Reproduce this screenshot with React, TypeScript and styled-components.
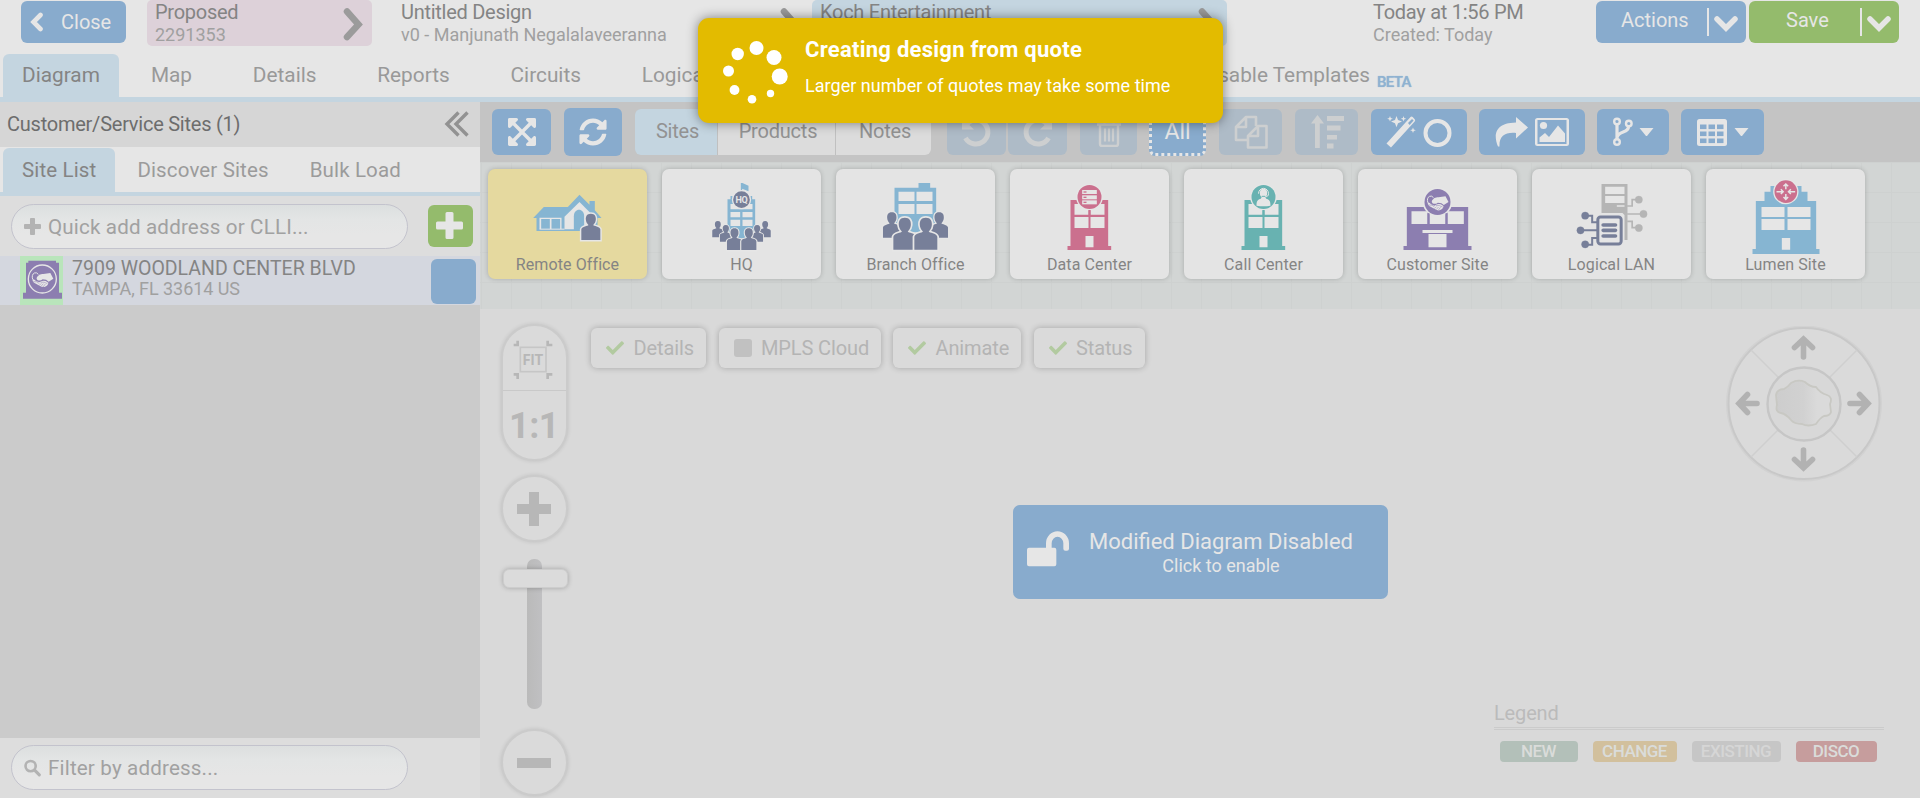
import React from 'react';
import styled, { createGlobalStyle, css } from 'styled-components';
import { FaCheck, FaExpandArrowsAlt, FaSyncAlt } from 'react-icons/fa';

const blue = '#88abcd';
const paleBlue = '#c4d5e0';
const green = '#94bb6c';
const light = '#e6e6e6';
const slate = '#777f99';
const sky = '#86b5d2';
const purple = '#8c7eb0';

const GlobalStyle = createGlobalStyle`
  * { box-sizing: border-box; }
  body { margin: 0; background: ${light}; overflow: hidden; }
  svg { display: block; flex: none; }
`;

const Page = styled.div`
  width: 1920px;
  height: 798px;
  display: flex;
  flex-direction: column;
  background: ${light};
  font-family: Roboto, sans-serif;
  font-size: 20px;
  line-height: 24px;
  color: #848484;
  white-space: nowrap;
  overflow: hidden;
`;

/* ---------- header ---------- */

const Header = styled.header`
  height: 54px;
  display: flex;
  padding-left: 21px;
`;

const CloseButton = styled.button`
  width: 105px;
  height: 42px;
  margin: 1px 21px 0 0;
  padding: 0 0 0 8px;
  display: flex;
  align-items: center;
  gap: 17px;
  border: 0;
  border-radius: 6px;
  background: ${blue};
  color: ${light};
  font: 400 20px/24px Roboto, sans-serif;
`;

const Step = styled.div<{ $width: number; $bg?: string }>`
  width: ${p => p.$width}px;
  height: 46px;
  padding: 0 8px;
  display: flex;
  justify-content: space-between;
  border-radius: 5px;
  background: ${p => p.$bg ?? 'transparent'};
  svg { margin: 8px -1px 0 0; }
`;

const StepText = styled.div`
  display: flex;
  flex-direction: column;
`;

const StepTitle = styled.span`
  height: 24px;
  line-height: 25px;
  font-size: 20px;
  letter-spacing: -0.27px;
`;

const StepSub = styled.span`
  font-size: 18px;
  line-height: 21px;
  color: #a0a0a0;
`;

const SplitButton = styled.div<{ $bg: string }>`
  width: 150px;
  height: 42px;
  margin: 1px 3px 0 0;
  display: flex;
  align-items: center;
  border-radius: 6px;
  background: ${p => p.$bg};
  color: ${light};
`;

const SplitLabel = styled.span<{ $left: number }>`
  flex: 1;
  padding: 0 0 4px ${p => p.$left}px;
`;

const SplitDrop = styled.span`
  width: 39px;
  height: 28px;
  padding: 3px 0 0 4px;
  display: flex;
  align-items: center;
  border-left: 2px solid ${light};
`;

/* ---------- main tabs ---------- */

const MainTabs = styled.nav`
  height: 48px;
  display: flex;
  padding-left: 3px;
  border-bottom: 5px solid ${paleBlue};
  font-size: 20.8px;
`;

const MainTab = styled.a<{ $active?: boolean; $gap?: number }>`
  height: 43px;
  padding: 0 19px;
  margin-left: ${p => p.$gap ?? 22.8}px;
  line-height: 42px;
  color: ${p => (p.$active ? '#848484' : '#999')};
  border-radius: 6px 6px 0 0;
  background: ${p => (p.$active ? paleBlue : 'transparent')};
`;

const Beta = styled.sub`
  margin-left: 7px;
  color: #8fb2d1;
  font-size: 15px;
  font-weight: 500;
  letter-spacing: -0.7px;
  line-height: 0;
  vertical-align: -5px;
  text-shadow: 0 0 1px #8fb2d1;
`;

/* ---------- side panel ---------- */

const Body = styled.div`
  flex: 1;
  display: flex;
`;

const SidePanel = styled.aside`
  width: 480px;
  display: flex;
  flex-direction: column;
  background: #cbcbcb;
`;

const PanelTitle = styled.div`
  height: 45px;
  padding: 0 11px 2px 7px;
  display: flex;
  align-items: center;
  justify-content: space-between;
  background: #d6d6d6;
  color: #6d6d6d;
  letter-spacing: -0.24px;
`;

const PanelTabs = styled.div`
  height: 49px;
  display: flex;
  padding: 1px 0 0 3px;
  background: ${light};
  border-bottom: 4px solid ${paleBlue};
`;

const PanelTab = styled.a<{ $active?: boolean }>`
  padding: 0 19px;
  margin-right: 3px;
  line-height: 44px;
  font-size: 20.5px;
  letter-spacing: 0.14px;
  color: ${p => (p.$active ? '#848484' : '#9b9b9b')};
  background: ${p => (p.$active ? paleBlue : 'transparent')};
  border-radius: 6px 6px 0 0;
`;

const InputRow = styled.div<{ $bottom?: boolean }>`
  height: 60px;
  margin-top: ${p => (p.$bottom ? 'auto' : 0)};
  padding: ${p => (p.$bottom ? 7 : 8)}px 7px 0 11px;
  display: flex;
  justify-content: space-between;
  background: #ddd;
`;

const RoundInput = styled.label`
  width: 397px;
  height: 45px;
  padding: 0 0 0 12px;
  display: flex;
  align-items: center;
  gap: 7px;
  border: 1px solid #c3c3cd;
  border-radius: 23px;
  background: linear-gradient(#dcdfdf, #e3e5e5 14px, #e6e6e6 30px);
  color: #a1a1a1;
  font-size: 20.6px;
  letter-spacing: 0.16px;
  svg { color: #b3b3b3; }
`;

const SquareButton = styled.button<{ $bg: string; $h: number; $top: number }>`
  width: 45px;
  height: ${p => p.$h}px;
  padding: 0 2px 2px 0;
  margin-top: ${p => p.$top}px;
  display: flex;
  align-items: center;
  justify-content: center;
  border: 0;
  border-radius: 6px;
  background: ${p => p.$bg};
  color: ${light};
`;

const SiteRow = styled.div`
  height: 49px;
  display: flex;
  padding: 0 4px 0 20px;
  background: #d4d7df;
`;

const SiteIcon = styled.div`
  width: 43px;
  height: 49px;
  margin-right: 9px;
  background: #b9e5bb;
`;

const SiteText = styled.div`
  flex: 1;
  padding-top: 1px;
  display: flex;
  flex-direction: column;
`;

const SiteStreet = styled.span`
  height: 21px;
  line-height: 23px;
  font-size: 19.5px;
`;

const SiteCity = styled.span`
  font-size: 18px;
  line-height: 22px;
  letter-spacing: -0.05px;
  color: #a0a0a0;
`;

/* ---------- work area ---------- */

const Work = styled.main`
  flex: 1;
  display: flex;
  flex-direction: column;
  background: #d9d9d9;
`;

const Toolbar = styled.div`
  height: 60px;
  padding: 0 0 0 12px;
  display: flex;
  align-items: center;
  background: #c4c4c4;
`;

const ToolButton = styled.button<{ $w: number; $gap?: number; $space?: number; $tall?: boolean; $off?: boolean; $dotted?: boolean }>`
  width: ${p => p.$w}px;
  height: ${p => (p.$tall ? 48 : 46)}px;
  margin: 0 ${p => p.$gap ?? 12}px 0 0;
  padding: 0;
  display: flex;
  align-items: center;
  justify-content: center;
  gap: ${p => p.$space ?? 0}px;
  border: 0;
  border-radius: 6px;
  font: 400 23px/26px Roboto, sans-serif;
  background: ${p => (p.$off ? '#aebbc7' : blue)};
  color: ${p => (p.$off ? '#cdcfd0' : light)};
  ${p => p.$dotted && css`border: 3px dotted ${light};`}
`;

const Segments = styled.div`
  height: 46px;
  margin-right: 16px;
  display: flex;
  gap: 1px;
  border-radius: 6px;
  background: #c0c0c0;
  overflow: hidden;
`;

const Segment = styled.span<{ $w: number; $active?: boolean }>`
  width: ${p => p.$w}px;
  padding-left: 3px;
  line-height: 45px;
  text-align: center;
  letter-spacing: -0.2px;
  color: #929292;
  background: ${p => (p.$active ? paleBlue : '#dcdcdc')};
`;

const Palette = styled.div`
  height: 147px;
  padding: 7px 0 0 8px;
  display: flex;
  gap: 15px;
  background-color: #d2d5d4;
  background-image: linear-gradient(90deg, #ced1d0 1px, transparent 1px), linear-gradient(#ced1d0 1px, transparent 1px);
  background-size: 30px 30px;
  background-position: 1px 0;
`;

const Card = styled.div<{ $active?: boolean }>`
  width: 159px;
  height: 110px;
  padding-top: 10px;
  display: flex;
  flex-direction: column;
  align-items: center;
  border-radius: 7px;
  background: ${p => (p.$active ? '#e5d99f' : '#e4e4e4')};
  box-shadow: 0 0 5px rgba(0, 0, 0, 0.2);
  font-size: 16px;
  line-height: 18px;
  letter-spacing: 0.1px;
`;

const Canvas = styled.section`
  flex: 1;
  position: relative;
  display: flex;
  padding: 15px 38px 0 22px;
`;

const ZoomColumn = styled.div`
  width: 65px;
  display: flex;
  flex-direction: column;
  align-items: center;
`;

const ringShadow = css`
  border: 2px solid #cbcbcb;
  box-shadow: 0 0 4px rgba(0, 0, 0, 0.12);
  background: #dadada;
`;

const ZoomPill = styled.div`
  width: 67px;
  height: 137px;
  border-radius: 34px;
  ${ringShadow}
`;

const PillHalf = styled.div<{ $line?: boolean }>`
  height: ${p => (p.$line ? 65 : 68)}px;
  padding: ${p => (p.$line ? '4px 3px 0 0' : '2px 1px 0 0')};
  display: flex;
  align-items: center;
  justify-content: center;
  border-bottom: ${p => (p.$line ? '1px solid #c9c9c9' : '0')};
  color: #b7b7b7;
  font-size: 36px;
  font-weight: 700;
  line-height: 40px;
  letter-spacing: -0.5px;
`;

const RoundButton = styled.div<{ $top: number }>`
  width: 67px;
  height: 67px;
  margin-top: ${p => p.$top}px;
  padding-right: 2px;
  display: flex;
  flex: none;
  align-items: center;
  justify-content: center;
  border-radius: 50%;
  ${ringShadow}
`;

const Track = styled.div`
  width: 15px;
  height: 150px;
  margin-top: 17px;
  padding: 10px 0 0 2px;
  display: flex;
  flex: none;
  justify-content: center;
  border-radius: 7px;
  background: linear-gradient(90deg, #bababa, #c0c0c2);
`;

const Handle = styled.div`
  width: 65px;
  height: 19px;
  flex: none;
  border-radius: 6px;
  border: 1px solid #cdcdcd;
  background: #dbdbdb;
  box-shadow: 0 0 5px rgba(0, 0, 0, 0.25);
`;

const Toggles = styled.div`
  margin: 4px 0 0 24px;
  display: flex;
  align-items: flex-start;
  gap: 12.5px;
`;

const Toggle = styled.div<{ $w: number }>`
  width: ${p => p.$w}px;
  height: 40px;
  padding: 0 0 0 15px;
  display: flex;
  align-items: center;
  gap: 9.5px;
  border-radius: 6px;
  background: #dadada;
  color: #b4b4b4;
  letter-spacing: -0.12px;
  box-shadow: 0 0 6px rgba(0, 0, 0, 0.24);
  svg { color: #b2caa0; }
`;

const EmptyBox = styled.span`
  width: 18px;
  height: 18px;
  border-radius: 3px;
  background: #c1c1c1;
`;

const PanWheel = styled.div`
  margin: 2px 0 0 auto;
`;

const Unlock = styled.button`
  position: absolute;
  left: 533px;
  top: 196px;
  width: 375px;
  height: 94px;
  padding: 0 0 0 14px;
  display: flex;
  align-items: center;
  gap: 20px;
  border: 0;
  border-radius: 7px;
  background: ${blue};
  color: ${light};
  font: 400 18px/22px Roboto, sans-serif;
`;

const LockIcon = styled.svg`
  margin-bottom: 6px;
`;

const UnlockText = styled.span`
  padding-top: 2px;
  display: flex;
  flex-direction: column;
  align-items: center;
`;

const UnlockTitle = styled.span`
  font-size: 22px;
  line-height: 26px;
`;

const Legend = styled.div`
  position: absolute;
  left: 1014px;
  top: 390px;
  width: 390px;
  color: #bbb;
  line-height: 28px;
  letter-spacing: -0.15px;
`;

const LegendItems = styled.div`
  padding: 11px 0 0 6px;
  display: flex;
  gap: 15px;
  border-top: 3px double #cbcbcb;
`;

const Badge = styled.span<{ $w: number; $bg: string; $dim?: boolean }>`
  width: ${p => p.$w}px;
  height: 21px;
  padding-right: 1px;
  border-radius: 4px;
  text-align: center;
  font-size: 17px;
  line-height: 21px;
  font-weight: 500;
  letter-spacing: -0.5px;
  color: ${p => (p.$dim ? '#d6d6d6' : '#dadcda')};
  background: ${p => p.$bg};
`;

/* ---------- toast ---------- */

const Toast = styled.div`
  position: absolute;
  left: 698px;
  top: 18px;
  width: 525px;
  height: 105px;
  padding: 19px 0 0 23px;
  display: flex;
  gap: 16px;
  border-radius: 11px;
  background: #e3bb00;
  color: #fff;
  box-shadow: 0 0 12px rgba(0, 0, 0, 0.45);
`;

const ToastTitle = styled.div`
  font-size: 22px;
  line-height: 26px;
  font-weight: 700;
  letter-spacing: 0.26px;
`;

const ToastBody = styled.div`
  margin-top: 10px;
  font-size: 18px;
  line-height: 26px;
  letter-spacing: 0.03px;
`;

/* ---------- drawings ---------- */

const StepArrow = () => (
  <svg width="22" height="33" viewBox="0 0 22 33">
    <path d="M4 3.5 15.5 16.5 4 29" fill="none" stroke="#9b9b9b" strokeWidth="6.5" strokeLinecap="round" />
  </svg>
);

const DropArrow = () => (
  <svg width="26" height="18" viewBox="0 0 26 18">
    <path d="M4 4 13 13 22 4" fill="none" stroke={light} strokeWidth="5.5" strokeLinecap="round" />
  </svg>
);

const Plus = ({ size }: { size: number }) => (
  <svg width={size} height={size} viewBox="0 0 27 27">
    <path d="M11 0h5q1.500 0 1.500 1.500v8h8q1.500 0 1.500 1.500v5q0 1.500-1.500 1.500h-8v8q0 1.500-1.500 1.500h-5q-1.500 0-1.500-1.500v-8h-8Q0 17.500 0 16v-5q0-1.500 1.500-1.500h8v-8Q9.500 0 11 0z" fill="currentColor" />
  </svg>
);

const SearchIcon = () => (
  <svg width="17" height="18" viewBox="0 0 18 18" fill="none" stroke="currentColor">
    <circle cx="7" cy="7" r="5.400" strokeWidth="2.800" />
    <path d="m11.500 11.500 4.700 4.700" strokeWidth="3.300" strokeLinecap="round" />
  </svg>
);

const Caret = () => (
  <svg width="15" height="9" viewBox="0 0 15 9"><path d="M.5 0h14L8 8H7z" fill={light} /></svg>
);

const CurlArrow = ({ flip }: { flip?: boolean }) => (
  <svg width="31" height="32" viewBox="0 0 31 32">
    <g transform={flip ? 'translate(31 0) scale(-1 1)' : undefined}>
      <path d="M6 8a12 12 0 1 1-1.500 14" fill="none" stroke="currentColor" strokeWidth="5" />
      <path d="M1 2v11.500h12z" fill="currentColor" />
    </g>
  </svg>
);

const TrashIcon = () => (
  <svg width="26" height="30" viewBox="0 0 26 30" fill="none" stroke="currentColor">
    <path d="M4 8v19q0 2 2 2h14q2 0 2-2V8" strokeWidth="2.400" />
    <path d="M1 7.500h24M8.500 7V2.500h9V7" strokeWidth="2.400" />
    <path d="M9 11.500v13M13 11.500v13M17 11.500v13" strokeWidth="2.200" />
  </svg>
);

const CopyIcon = () => (
  <svg width="34" height="34" viewBox="0 0 34 34" fill="none" stroke="currentColor" strokeWidth="2.600" strokeLinejoin="round">
    <path d="M13 25H2V12l10-10h10v9M12 2v10H2" />
    <path d="M14 21 24 11h8.500v21.500H14zM24 11v10H14" />
  </svg>
);

const SortIcon = () => (
  <svg width="34" height="34" viewBox="0 0 34 34" fill="currentColor">
    <path d="M7.500 0 14 8.500H9.800V33H5V8.500H1z" />
    <path d="M17 1h17v5H17zM17 10.500h13.500v5H17zM17 20h10v4.500H17zM17 28.500h6.500v5H17z" />
  </svg>
);

const WandIcon = () => (
  <svg width="66" height="32" viewBox="0 0 66 32">
    <path d="M.5 27.500 24.500 1q1-1 2.200 0l2 2.200q1 1 0 2.200L5 31.500z" fill={light} />
    <path d="m22 7 4-4 1.600 1.600-4 4.500z" fill={blue} />
    <path d="m10.500 0 1.500 4 4 1.600L12 7.200l-1.500 4L9 7.200 5 5.600 9 4zM4 0l.8 2 2 .8-2 .8L4 5.500l-.8-1.900-2-.8 2-.8zM17.500 0l.7 2 2 .8-2 .8-.7 1.900-.7-1.900-2-.8 2-.8zM27 11.500l.8 2 2 .8-2 .8-.8 1.900-.8-1.900-2-.8 2-.8z" fill={light} />
    <circle cx="51.500" cy="17" r="12" fill="none" stroke={light} strokeWidth="4" />
  </svg>
);

const ShareIcon = () => (
  <svg width="75" height="30" viewBox="0 0 75 30" fill={light}>
    <path d="M21 0 33 10.500 21 21.500V16C10 15 4 19 4.500 29.500H3C-1 20-2 6 21 5.500z" />
    <path d="M42.500 1h29q2.500 0 2.500 2.500v23q0 2.500-2.500 2.500h-29q-2.500 0-2.500-2.500v-23Q40 1 42.500 1zm0 2v24h29V3z" fillRule="evenodd" />
    <circle cx="48.500" cy="8.500" r="3.600" />
    <path d="M44.500 25v-4.500L50 16l4 4 9-11.500 7 8V25z" />
  </svg>
);

const BranchIcon = () => (
  <svg width="20" height="30" viewBox="0 0 20 30" fill="none" stroke={light}>
    <g strokeWidth="2.400">
      <circle cx="4" cy="4.500" r="2.800" /><circle cx="4" cy="25" r="2.800" /><circle cx="15.800" cy="6.500" r="2.800" />
    </g>
    <path d="M4 7.500v15M15.500 9.500c0 7-9.500 4-11.300 10.500" strokeWidth="3.200" />
  </svg>
);

const TableIcon = () => (
  <svg width="30" height="27" viewBox="0 0 30 27">
    <rect width="30" height="27" rx="2.500" fill={light} />
    {[3, 11.5, 20].map(x => [5.5, 12.5, 19.5].map(y => (
      <rect key={`${x}-${y}`} x={x} y={y} width="6.500" height="4.600" fill={blue} />
    )))}
  </svg>
);

type PersonProps = { x: number; y: number; w: number; h: number };
const Person = ({ x, y, w, h }: PersonProps) => (
  <path
    transform={`translate(${x} ${y}) scale(${w / 60} ${h / 84})`}
    d="M30 0C17 0 14 9 14.500 19c.5 8 4 13 8 17-1 4-20 4-22 14V84h59V50c-2-10-21-10-22-14 4-4 7.500-9 8-17C46 9 43 0 30 0z"
    fill={slate}
    stroke={light}
    strokeWidth="9"
    paintOrder="stroke"
  />
);

const Handshake = ({ x, y }: { x: number; y: number }) => (
  <g transform={`translate(${x} ${y})`}>
    <path d="M4 22Q0 8 9 3q7-3 12 4" fill="none" stroke={light} strokeWidth="3" />
    <path d="M17 15Q24 4 36 6l21-3 9 17-14 9q-6-7-18-7-8 6-16 2-4-4-1-9z" fill={light} />
    <path d="M4 21q6 2 10 6l10 4q8-7 19-4l8 5q0 8-12 13-8 1-14-4L8 32Q2 28 4 21z" fill={light} />
    <path d="M6 29q12-2 18 6m0 5 6-6m-1 9 7-8m-1 10 7-9M28 31q10-3 20 4" fill="none" stroke={purple} strokeWidth="1.500" />
  </g>
);

const Drawing = ({ left, children }: { left: number; children: React.ReactNode }) => (
  <svg width="80" height="77" viewBox={`${left} 87 240 231`}>{children}</svg>
);

const RemoteOffice = () => (
  <Drawing left={142.5}>
    <path d="M158 204 190 171h72l35-37 30 30v-11h16v28l20 23h-12v39H168v-39z" fill={sky} />
    <path d="M252 238v-38l45-44 44 44v38z" fill={light} />
    <path d="M280 243v-44c0-26 31-26 31 0v44z" fill={sky} />
    <path d="M177 203h66v34h-4v-30h-26v30h-5v-30h-26v30h-5z" fill={light} />
    <path d="M177 236h75v3h-75z" fill={light} />
    <Person x={302} y={191} w={58} h={79} />
  </Drawing>
);

const Headquarters = () => (
  <Drawing left={664.5}>
    <path d="m781 99 5 0 18 8v17l-19-8v12h-4z" fill={sky} />
    <path d="M741 148h9v-10h65v10h9v117h-83z" fill={sky} />
    <path d="M750 162h66v16h-66zM750 186h29v16h-29zM786 186h30v16h-30zM750 209h29v19h-29zM786 209h30v19h-30z" fill={light} />
    <circle cx="783" cy="149" r="29" fill={light} />
    <circle cx="783" cy="149" r="25" fill={slate} />
    <text x="783" y="159" textAnchor="middle" fontSize="27" fontWeight="700" fill={light} letterSpacing="-1">HQ</text>
    <Person x={695} y={213} w={34} h={49} /><Person x={837} y={213} w={34} h={49} />
    <Person x={718} y={225} w={36} h={50} /><Person x={812} y={225} w={36} h={50} />
    <Person x={739} y={235} w={46} h={65} /><Person x={782} y={235} w={46} h={65} />
  </Drawing>
);

const Branch = () => (
  <Drawing left={1186.5}>
    <path d="M1242 113h72V99h35v14h18v134h-125z" fill={sky} />
    <path d="M1254 125h48v28h-48zM1308 125h48v28h-48zM1254 162h48v30h-48zM1308 162h48v30h-48z" fill={light} />
    <Person x={1207} y={187} w={54} h={76} /><Person x={1349} y={187} w={54} h={76} />
    <Person x={1238} y={203} w={70} h={96} /><Person x={1301} y={203} w={70} h={96} />
  </Drawing>
);

const Tower = ({ color, children }: { color: string; children: React.ReactNode }) => (
  <Drawing left={148.5}>
    <path d="M210 150h113v138h9v12H201v-12h9z" fill={color} />
    <path d="M222 162h42v32h-42zM270 162h42v32h-42zM222 201h42v33h-42zM270 201h42v33h-42zM255 258h24v34h-24z" fill={light} />
    <circle cx="267" cy="141" r="40" fill={light} />
    <path d="M264 180h6v20h-6z" fill={color} />
    <circle cx="267" cy="141" r="36" fill={color} />
    {children}
  </Drawing>
);

const DataCenter = () => (
  <Tower color="#cb708e">
    {[120, 136, 151].map(y => (
      <g key={y}>
        <rect x="245" y={y} width="44" height="12" fill={light} />
        <rect x="249" y={y + 4} width="9" height="4" fill="#cb708e" />
      </g>
    ))}
  </Tower>
);

const CallCenter = () => (
  <Tower color="#68b2b1">
    <ellipse cx="267" cy="129" rx="11" ry="13" fill={light} />
    <path d="M252 131a15 16 0 0 1 30 0c0 7-4 9-8 9" fill="none" stroke={light} strokeWidth="3" />
    <path d="M246 167c0-16 4-18 13-21l3-6h10l3 6c9 3 13 5 13 21q-21 4-42 0z" fill={light} />
    <path d="M262 139h10" stroke="#68b2b1" strokeWidth="3" />
  </Tower>
);

const CustomerSite = () => (
  <Drawing left={1192.5}>
    <path d="M1219 171h184v117h10v12h-204v-12h10z" fill={purple} />
    <path d="M1233 184h48v38h-48zM1287 184h48v38h-48zM1341 184h49v38h-49zM1266 240h90v9h-90zM1284 252h54v40h-54z" fill={light} />
    <circle cx="1311" cy="156" r="44" fill={light} />
    <path d="M1281 190h6v32h-6zM1335 190h6v32h-6z" fill={purple} />
    <circle cx="1311" cy="156" r="39" fill={purple} />
    <Handshake x={1278} y={136} />
  </Drawing>
);

const LogicalLan = () => (
  <Drawing left={274.5}>
    <g fill="#b5b5b5" stroke="#b5b5b5">
      <path d="M363 102h78v168h-9v-75l-6-6h-63z" stroke="none" />
      <path d="M440 168h15v-19h18M440 192h48M440 214h15v19h18" fill="none" strokeWidth="5" />
      <circle cx="475" cy="149" r="11" /><circle cx="489" cy="192" r="11" /><circle cx="475" cy="234" r="11" />
    </g>
    <path d="M374 110h58v22h-58zM374 138h58v21h-58zM409 166h23v4h-23z" fill={light} />
    <g fill={slate} stroke={slate}>
      <path d="M315 197h20v20h18M300 241h52M315 284h20v-20h18" fill="none" strokeWidth="6" />
      <circle cx="314" cy="197" r="11" /><circle cx="300" cy="241" r="11" /><circle cx="314" cy="283" r="11" />
      <rect x="352" y="201" width="70" height="81" rx="8" fill={light} strokeWidth="9" />
      <path d="M368 225h37M368 241h37M368 258h37" strokeWidth="11" strokeLinecap="round" />
    </g>
  </Drawing>
);

const LumenSite = () => (
  <Drawing left={796.5}>
    <path d="M826 153h26v-28h18v-17h93v17h18v28h26v144h10v15H816v-15h10z" fill={sky} />
    <path d="M843 171h69v30h-69zM921 171h69v30h-69zM843 207h69v33h-69zM921 207h69v33h-69zM904 264h25v35h-25z" fill={light} />
    <circle cx="916" cy="125" r="38" fill={light} />
    <circle cx="916" cy="125" r="34" fill="#cb708e" />
    <path d="M916 118V102m-7 7 7-7 7 7M916 132v16m-7-7 7 7 7-7M888 125h20m-7-7 7 7-7 7M944 125h-20m7-7-7 7 7 7" fill="none" stroke={light} strokeWidth="4.500" />
  </Drawing>
);

const SiteGlyph = () => (
  <svg width="43" height="49" viewBox="0 0 129 147">
    <path d="M18 20h7v-6h83v6h9v90h9v18H9v-18h9z" fill={purple} />
    <circle cx="67" cy="69" r="42" fill={purple} stroke={light} strokeWidth="4" />
    <Handshake x={34} y={48} />
  </svg>
);

const FitIcon = () => (
  <svg width="40" height="40" viewBox="0 0 120 120" fill="none" stroke="#b7b7b7">
    <path d="M2 15h12V2M118 15h-14V2M2 103h12v14M118 103h-14v14" strokeWidth="8" />
    <rect x="22" y="22" width="77" height="73" stroke="#c6c6c6" strokeWidth="5" />
    <text x="60" y="74" textAnchor="middle" fontSize="42" fontWeight="700" letterSpacing="0" fill="#b7b7b7" stroke="none">FIT</text>
  </svg>
);

const Wheel = () => (
  <svg width="156" height="156" viewBox="0 0 156 156">
    <defs>
      <linearGradient id="land"><stop offset="0" stopColor="#cdcdcd" /><stop offset=".5" stopColor="#d1d1d1" /><stop offset=".75" stopColor="#dadada" /></linearGradient>
    </defs>
    <circle cx="78" cy="77.500" r="77" fill="none" stroke="#d2d2d2" strokeWidth="2" />
    <circle cx="78" cy="77.500" r="75.500" fill="#dadada" stroke="#c8c8c8" strokeWidth="2" />
    <path d="M25 24 53 52M131 24 103 52M25 131 53 103M131 131 103 103" stroke="#cfcfcf" strokeWidth="1.500" />
    <circle cx="78" cy="78" r="36.500" fill="#d8d8d8" stroke="#c6c6c6" strokeWidth="2.400" />
    <path d="M50 69Q51 63 58 63Q62 61 65 57Q72 53 79 56Q84 61 90 61Q94 67 101 69Q107 71 104 78L105 86Q104 90 98 90Q94 92 90 98Q82 101 76 98Q68 98 65 94Q60 88 55 87Q49 86 51 79z" fill="url(#land)" stroke="#c8c8c3" strokeWidth="1.800" strokeLinejoin="round" />
    {[0, 90, 180, 270].map(angle => (
      <path key={angle} transform={`rotate(${angle} 77.500 77.500)`} d="M77.500 31V14M68.500 21.500 77.500 13l9 8.500" fill="none" stroke="#b2b2b2" strokeWidth="5.600" strokeLinecap="round" />
    ))}
  </svg>
);

const Spinner = () => (
  <svg width="68" height="72" viewBox="721 37 68 72" fill="#fff">
    <circle cx="756.500" cy="48" r="7" /><circle cx="737.700" cy="54" r="6.200" />
    <circle cx="728.500" cy="71" r="5.500" /><circle cx="734.500" cy="90" r="4.900" />
    <circle cx="752" cy="99.300" r="4.300" /><circle cx="770.500" cy="93.500" r="3.700" />
    <circle cx="779.700" cy="76.500" r="8" /><circle cx="774" cy="57.500" r="7.500" />
  </svg>
);

const siteTypes: { label: string; icon: React.ReactNode; active?: boolean }[] = [
  { label: 'Remote Office', icon: <RemoteOffice />, active: true },
  { label: 'HQ', icon: <Headquarters /> },
  { label: 'Branch Office', icon: <Branch /> },
  { label: 'Data Center', icon: <DataCenter /> },
  { label: 'Call Center', icon: <CallCenter /> },
  { label: 'Customer Site', icon: <CustomerSite /> },
  { label: 'Logical LAN', icon: <LogicalLan /> },
  { label: 'Lumen Site', icon: <LumenSite /> },
];

const HeaderStep = ({ width, bg, title, sub, arrow = true }: { width: number; bg?: string; title: string; sub?: string; arrow?: boolean }) => (
  <Step $width={width} $bg={bg}>
    <StepText><StepTitle>{title}</StepTitle>{sub && <StepSub>{sub}</StepSub>}</StepText>
    {arrow && <StepArrow />}
  </Step>
);

const HeaderGap = styled.span<{ $w: number }>`
  width: ${p => p.$w}px;
`;

export default function App() {
  return (
    <Page>
      <GlobalStyle />
      <Header>
        <CloseButton>
          <svg width="15" height="20" viewBox="0 0 15 20"><path d="M11.500 3 4.500 10l7 7" fill="none" stroke={light} strokeWidth="4.600" strokeLinecap="round" /></svg>
          Close
        </CloseButton>
        <HeaderStep width={225} bg="#ddd1d9" title="Proposed" sub="2291353" />
        <HeaderGap $w={21} />
        <HeaderStep width={416} title="Untitled Design" sub="v0 - Manjunath Negalalaveeranna" />
        <HeaderGap $w={3} />
        <HeaderStep width={415} bg={paleBlue} title="Koch Entertainment" />
        <HeaderGap $w={138} />
        <HeaderStep width={231} title="Today at 1:56 PM" sub="Created: Today" arrow={false} />
        <SplitButton $bg={blue}><SplitLabel $left={25}>Actions</SplitLabel><SplitDrop><DropArrow /></SplitDrop></SplitButton>
        <SplitButton $bg={green}><SplitLabel $left={37}>Save</SplitLabel><SplitDrop><DropArrow /></SplitDrop></SplitButton>
      </Header>

      <MainTabs>
        <MainTab $active $gap={0}>Diagram</MainTab>
        <MainTab $gap={13}>Map</MainTab>
        <MainTab>Details</MainTab>
        <MainTab>Reports</MainTab>
        <MainTab>Circuits</MainTab>
        <MainTab>Logical</MainTab>
        <MainTab $gap={436}>Reusable Templates<Beta>BETA</Beta></MainTab>
      </MainTabs>

      <Body>
        <SidePanel>
          <PanelTitle>
            Customer/Service Sites (1)
            <svg width="25" height="26" viewBox="0 0 25 26"><path d="M14.500 1.500 3 13l11.500 11.500M23.500 1.500 12 13l11.500 11.500" fill="none" stroke="#929292" strokeWidth="3.400" /></svg>
          </PanelTitle>
          <PanelTabs>
            <PanelTab $active>Site List</PanelTab>
            <PanelTab>Discover Sites</PanelTab>
            <PanelTab>Bulk Load</PanelTab>
          </PanelTabs>
          <InputRow>
            <RoundInput><Plus size={17} />Quick add address or CLLI...</RoundInput>
            <SquareButton $bg={green} $h={42} $top={1}><Plus size={27} /></SquareButton>
          </InputRow>
          <SiteRow>
            <SiteIcon><SiteGlyph /></SiteIcon>
            <SiteText><SiteStreet>7909 WOODLAND CENTER BLVD</SiteStreet><SiteCity>TAMPA, FL 33614 US</SiteCity></SiteText>
            <SquareButton $bg={blue} $h={45} $top={3} />
          </SiteRow>
          <InputRow $bottom>
            <RoundInput><SearchIcon />Filter by address...</RoundInput>
          </InputRow>
        </SidePanel>

        <Work>
          <Toolbar>
            <ToolButton $w={59} $gap={13}><FaExpandArrowsAlt size={32} /></ToolButton>
            <ToolButton $w={58} $gap={13} $tall><FaSyncAlt size={28} /></ToolButton>
            <Segments>
              <Segment $w={82} $active>Sites</Segment>
              <Segment $w={117}>Products</Segment>
              <Segment $w={95}>Notes</Segment>
            </Segments>
            <ToolButton $w={59} $gap={2} $off><CurlArrow /></ToolButton>
            <ToolButton $w={59} $gap={13} $off><CurlArrow flip /></ToolButton>
            <ToolButton $w={57} $off><TrashIcon /></ToolButton>
            <ToolButton $w={57} $gap={13} $tall $dotted>All</ToolButton>
            <ToolButton $w={63} $gap={13} $off><CopyIcon /></ToolButton>
            <ToolButton $w={63} $gap={13} $off><SortIcon /></ToolButton>
            <ToolButton $w={96}><WandIcon /></ToolButton>
            <ToolButton $w={106}><ShareIcon /></ToolButton>
            <ToolButton $w={72} $space={6}><BranchIcon /><Caret /></ToolButton>
            <ToolButton $w={83} $space={7}><TableIcon /><Caret /></ToolButton>
          </Toolbar>

          <Palette>
            {siteTypes.map(s => <Card key={s.label} $active={s.active}>{s.icon}{s.label}</Card>)}
          </Palette>

          <Canvas>
            <ZoomColumn>
              <ZoomPill>
                <PillHalf $line><FitIcon /></PillHalf>
                <PillHalf>1:1</PillHalf>
              </ZoomPill>
              <RoundButton $top={14}>
                <svg width="34" height="34" viewBox="0 0 34 34"><path d="M12 0h10v12h12v10H22v12H12V22H0V12h12z" fill="#b7b7b7" /></svg>
              </RoundButton>
              <Track><Handle /></Track>
              <RoundButton $top={20}>
                <svg width="34" height="10" viewBox="0 0 34 10"><path d="M0 0h34v10H0z" fill="#b7b7b7" /></svg>
              </RoundButton>
            </ZoomColumn>
            <Toggles>
              <Toggle $w={115}><FaCheck size={18} />Details</Toggle>
              <Toggle $w={162}><EmptyBox />MPLS Cloud</Toggle>
              <Toggle $w={128}><FaCheck size={18} />Animate</Toggle>
              <Toggle $w={111}><FaCheck size={18} />Status</Toggle>
            </Toggles>
            <PanWheel><Wheel /></PanWheel>

            <Unlock>
              <LockIcon width="42" height="36" viewBox="0 0 126 108">
                <path d="M57 50V37a34 36 0 0 1 69 0v16q0 6-6 6h-5q-6 0-6-6V37a17 19 0 0 0-35 0v13h8q6 0 6 6v44q0 6-6 6H6q-6 0-6-6V56q0-6 6-6z" fill={light} />
              </LockIcon>
              <UnlockText><UnlockTitle>Modified Diagram Disabled</UnlockTitle>Click to enable</UnlockText>
            </Unlock>

            <Legend>
              Legend
              <LegendItems>
                <Badge $w={78} $bg="#b3c0b9">NEW</Badge>
                <Badge $w={84} $bg="#d2c09d">CHANGE</Badge>
                <Badge $w={89} $bg="#c6c6c6" $dim>EXISTING</Badge>
                <Badge $w={81} $bg="#c69d9d">DISCO</Badge>
              </LegendItems>
            </Legend>
          </Canvas>
        </Work>
      </Body>

      <Toast>
        <Spinner />
        <div>
          <ToastTitle>Creating design from quote</ToastTitle>
          <ToastBody>Larger number of quotes may take some time</ToastBody>
        </div>
      </Toast>
    </Page>
  );
}
